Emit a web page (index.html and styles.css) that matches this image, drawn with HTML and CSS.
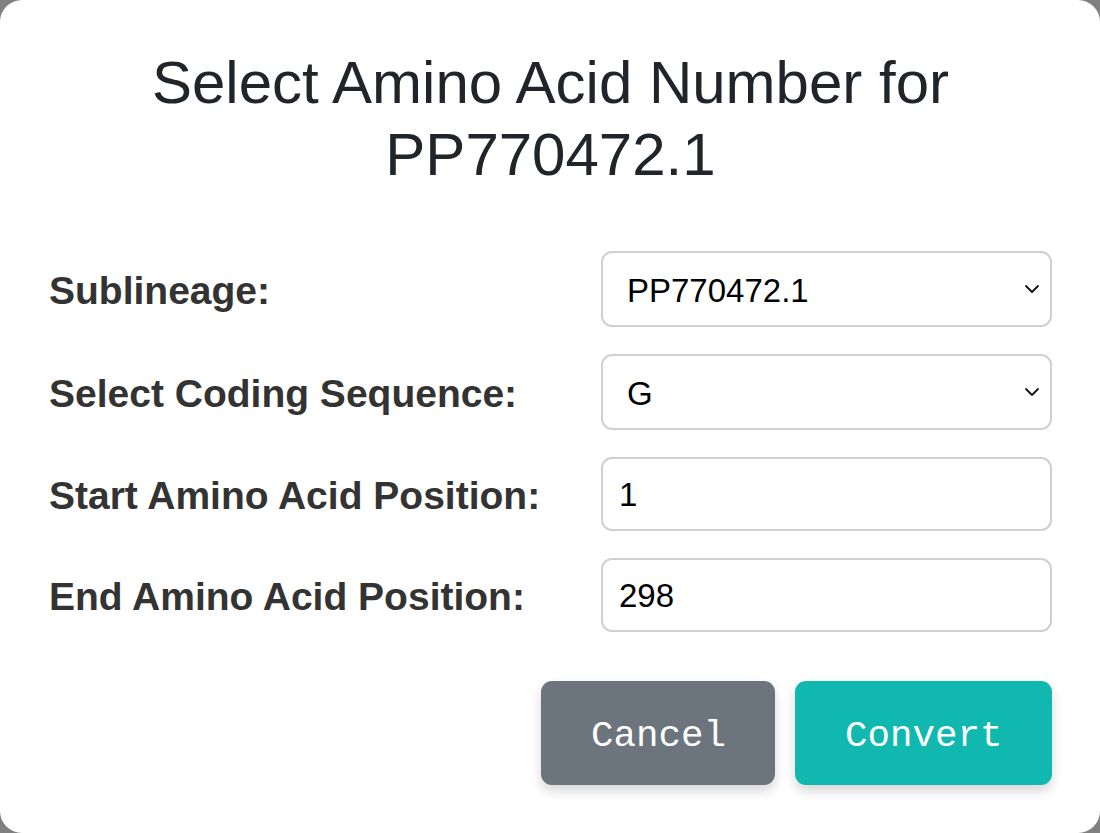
FILE: index.html
```html
<!DOCTYPE html>
<html lang="en">
<head>
<meta charset="utf-8">
<title>Select Amino Acid Number</title>
<link rel="stylesheet" href="styles.css">
</head>
<body>
<div class="modal">
  <h2 class="title">Select Amino Acid Number for<br>PP770472.1</h2>
  <form class="form">
    <label class="label" for="sub">Sublineage:</label>
    <div class="select-wrap">
      <select id="sub" class="field select"><option>PP770472.1</option></select>
      <svg class="chev" width="16" height="10" viewBox="0 0 16 10"><path d="M2 2 L8 8 L14 2" fill="none" stroke="#111" stroke-width="1.8" stroke-linecap="round" stroke-linejoin="round"/></svg>
    </div>
    <label class="label" for="cds">Select Coding Sequence:</label>
    <div class="select-wrap">
      <select id="cds" class="field select"><option>G</option></select>
      <svg class="chev" width="16" height="10" viewBox="0 0 16 10"><path d="M2 2 L8 8 L14 2" fill="none" stroke="#111" stroke-width="1.8" stroke-linecap="round" stroke-linejoin="round"/></svg>
    </div>
    <label class="label" for="start">Start Amino Acid Position:</label>
    <input id="start" class="field input" type="text" value="1">
    <label class="label" for="end">End Amino Acid Position:</label>
    <input id="end" class="field input" type="text" value="298">
  </form>
  <div class="actions">
    <button class="btn btn-cancel" type="button">Cancel</button>
    <button class="btn btn-convert" type="button">Convert</button>
  </div>
</div>
</body>
</html>
```
FILE: styles.css
```css
html, body {
  margin: 0;
  padding: 0;
  height: 100%;
}
body {
  background: #808080;
  font-family: "Liberation Sans", Arial, sans-serif;
}
.modal {
  box-sizing: border-box;
  height: 833px;
  background: #fff;
  border-radius: 22px;
  padding: 47px 48px 48px 49px;
  display: flex;
  flex-direction: column;
}
.title {
  margin: 0;
  text-align: center;
  font-weight: normal;
  font-size: 60px;
  line-height: 72px;
  color: #212529;
}
.form {
  margin-top: 60px;
  display: grid;
  grid-template-columns: 1fr 451px;
  grid-template-rows: 76px 76px 74px 74px;
  row-gap: 27px;
  align-items: center;
}
.label {
  font-weight: bold;
  font-size: 39px;
  color: #333;
  padding-top: 4px;
}
.select-wrap {
  position: relative;
  height: 100%;
}
.field {
  box-sizing: border-box;
  width: 100%;
  height: 100%;
  border: 2px solid #d0d0d0;
  border-radius: 11px;
  background: #fff;
  font-family: "Liberation Sans", Arial, sans-serif;
  font-size: 33px;
  color: #000;
  outline: none;
  margin: 0;
}
.select {
  appearance: none;
  -webkit-appearance: none;
  padding: 2px 40px 0 24px;
}
.input {
  padding: 2px 16px 0;
}
.chev {
  position: absolute;
  right: 12px;
  top: 50%;
  margin-top: -5px;
  pointer-events: none;
}
.actions {
  margin-top: 49px;
  display: flex;
  justify-content: flex-end;
  gap: 20px;
}
.btn {
  height: 104px;
  padding: 6px 49.5px 0;
  border: none;
  border-radius: 11px;
  font-family: "Liberation Mono", "DejaVu Sans Mono", monospace;
  font-size: 37.5px;
  color: #fff;
  box-shadow: 0 6px 12px rgba(0, 0, 0, 0.16);
  cursor: pointer;
}
.btn-cancel {
  background: #6c757d;
}
.btn-convert {
  background: #11b8b0;
}
```
